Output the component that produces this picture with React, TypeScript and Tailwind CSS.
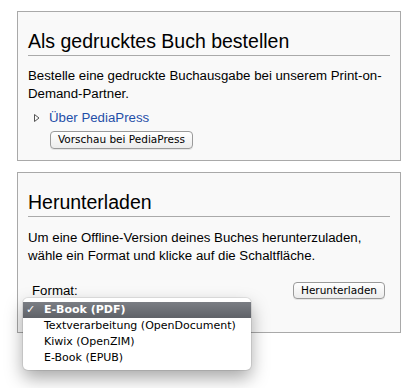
import type React from "react"

const sans = "font-['Liberation_Sans',Arial,sans-serif]"
const ui = "font-['DejaVu_Sans',sans-serif]"

const MacButton: React.FC<{ label: string; className?: string }> = ({ label, className }) => (
    <button
        className={`${ui} rounded-[4px] border border-[#9a9a9a] bg-gradient-to-b from-white to-[#ececec] px-[7px] text-[10.5px] leading-[15px] whitespace-nowrap text-black shadow-[0_1px_0_rgba(0,0,0,0.08)] ${className ?? ""}`}
    >
        {label}
    </button>
)

const App: React.FC = () => {
    const formats = ["E-Book (PDF)", "Textverarbeitung (OpenDocument)", "Kiwix (OpenZIM)", "E-Book (EPUB)"]

    return (
        <div className={`${sans} h-[388px] w-[411px] overflow-hidden bg-white pt-[11px] pl-[17px]`}>
            {/* Druckausgabe */}
            <div className="h-[150px] w-[384px] border border-[#a9a9a9] bg-[#f9f9f9] px-[10px] pt-[17px]">
                <h2 className="border-b border-[#aaaaaa] pb-[2px] text-[19.5px] leading-[24px] text-black">
                    Als gedrucktes Buch bestellen
                </h2>
                <p className="mt-[11px] text-[13.25px] leading-[18px] text-black">
                    Bestelle eine gedruckte Buchausgabe bei unserem Print-on-Demand-Partner.
                </p>
                <div className="mt-[6px] flex items-center pl-[6px]">
                    <svg width="6" height="8" viewBox="0 0 6 8" className="mr-[9px]">
                        <path d="M0.5 0.5 L5 4 L0.5 7.5 Z" fill="none" stroke="#555" strokeWidth="1" />
                    </svg>
                    <a className="text-[13.25px] leading-[17px] text-[#1f4ea8]">Über PediaPress</a>
                </div>
                <MacButton label="Vorschau bei PediaPress" className="mt-[1px] ml-[22px] h-[18px]" />
            </div>

            {/* Herunterladen */}
            <div className="relative mt-[11px] h-[161px] w-[384px] border border-[#a9a9a9] bg-[#f9f9f9] px-[10px] pt-[17px]">
                <h2 className="border-b border-[#aaaaaa] pb-[2px] text-[19.5px] leading-[24px] text-black">
                    Herunterladen
                </h2>
                <p className="mt-[12px] text-[13.25px] leading-[18px] text-black">
                    Um eine Offline-Version deines Buches herunterzuladen, wähle ein Format und klicke auf die Schaltfläche.
                </p>
                <div className="mt-[17px] flex items-center justify-between pl-[4px] pr-[5px]">
                    <span className="text-[13.25px] leading-[16px] text-black">Format:</span>
                    <MacButton label="Herunterladen" className="h-[17px]" />
                </div>

                <div
                    className={`${ui} absolute top-[125px] left-[5px] w-[228px] rounded-[5px] bg-white py-[4px] shadow-[0_8px_18px_rgba(0,0,0,0.35),0_0_0_1px_rgba(0,0,0,0.08)]`}
                >
                    {formats.map((f, i) => (
                        <div
                            key={f}
                            className={
                                i === 0
                                    ? "flex h-[16px] items-center bg-gradient-to-b from-[#7b7e84] to-[#5f6268] text-[11px] leading-[16px] font-bold whitespace-nowrap text-white"
                                    : "flex h-[16px] items-center text-[11px] leading-[16px] whitespace-nowrap text-black"
                            }
                        >
                            <span className="w-[21px] shrink-0 pl-[3px] text-[11px]">{i === 0 ? "✓" : ""}</span>
                            <span>{f}</span>
                        </div>
                    ))}
                </div>
            </div>
        </div>
    )
}

export default App
